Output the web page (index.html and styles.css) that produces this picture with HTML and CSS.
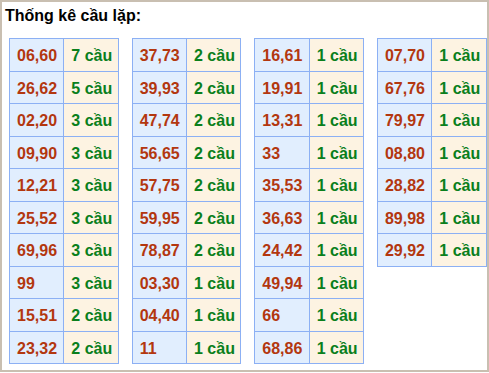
FILE: index.html
```html
<!DOCTYPE html>
<html lang="vi">
<head>
<meta charset="utf-8">
<title>Thống kê cầu lặp</title>
<link rel="stylesheet" href="styles.css">
</head>
<body>
<div class="box">
  <div class="title">Thống kê cầu lặp:</div>
  <div class="tables">
    <table class="tk">
      <tr><td class="num">06,60</td><td class="cnt">7 cầu</td></tr>
      <tr><td class="num">26,62</td><td class="cnt">5 cầu</td></tr>
      <tr><td class="num">02,20</td><td class="cnt">3 cầu</td></tr>
      <tr><td class="num">09,90</td><td class="cnt">3 cầu</td></tr>
      <tr><td class="num">12,21</td><td class="cnt">3 cầu</td></tr>
      <tr><td class="num">25,52</td><td class="cnt">3 cầu</td></tr>
      <tr><td class="num">69,96</td><td class="cnt">3 cầu</td></tr>
      <tr><td class="num">99</td><td class="cnt">3 cầu</td></tr>
      <tr><td class="num">15,51</td><td class="cnt">2 cầu</td></tr>
      <tr><td class="num">23,32</td><td class="cnt">2 cầu</td></tr>
    </table>
    <table class="tk">
      <tr><td class="num">37,73</td><td class="cnt">2 cầu</td></tr>
      <tr><td class="num">39,93</td><td class="cnt">2 cầu</td></tr>
      <tr><td class="num">47,74</td><td class="cnt">2 cầu</td></tr>
      <tr><td class="num">56,65</td><td class="cnt">2 cầu</td></tr>
      <tr><td class="num">57,75</td><td class="cnt">2 cầu</td></tr>
      <tr><td class="num">59,95</td><td class="cnt">2 cầu</td></tr>
      <tr><td class="num">78,87</td><td class="cnt">2 cầu</td></tr>
      <tr><td class="num">03,30</td><td class="cnt">1 cầu</td></tr>
      <tr><td class="num">04,40</td><td class="cnt">1 cầu</td></tr>
      <tr><td class="num">11</td><td class="cnt">1 cầu</td></tr>
    </table>
    <table class="tk">
      <tr><td class="num">16,61</td><td class="cnt">1 cầu</td></tr>
      <tr><td class="num">19,91</td><td class="cnt">1 cầu</td></tr>
      <tr><td class="num">13,31</td><td class="cnt">1 cầu</td></tr>
      <tr><td class="num">33</td><td class="cnt">1 cầu</td></tr>
      <tr><td class="num">35,53</td><td class="cnt">1 cầu</td></tr>
      <tr><td class="num">36,63</td><td class="cnt">1 cầu</td></tr>
      <tr><td class="num">24,42</td><td class="cnt">1 cầu</td></tr>
      <tr><td class="num">49,94</td><td class="cnt">1 cầu</td></tr>
      <tr><td class="num">66</td><td class="cnt">1 cầu</td></tr>
      <tr><td class="num">68,86</td><td class="cnt">1 cầu</td></tr>
    </table>
    <table class="tk">
      <tr><td class="num">07,70</td><td class="cnt">1 cầu</td></tr>
      <tr><td class="num">67,76</td><td class="cnt">1 cầu</td></tr>
      <tr><td class="num">79,97</td><td class="cnt">1 cầu</td></tr>
      <tr><td class="num">08,80</td><td class="cnt">1 cầu</td></tr>
      <tr><td class="num">28,82</td><td class="cnt">1 cầu</td></tr>
      <tr><td class="num">89,98</td><td class="cnt">1 cầu</td></tr>
      <tr><td class="num">29,92</td><td class="cnt">1 cầu</td></tr>
    </table>
  </div>
</div>
</body>
</html>
```
FILE: styles.css
```css
html, body {
  margin: 0;
  padding: 0;
  background: #ffffff;
}
body {
  font-family: "Liberation Sans", Arial, sans-serif;
  font-size: 16px;
}
.box {
  box-sizing: border-box;
  width: 489px;
  height: 372px;
  border: 2px solid #c9bfb1;
  padding: 5px 0 0 3px;
}
.title {
  font-weight: bold;
  color: #000;
  line-height: 18.4px;
}
.tables {
  display: flex;
  align-items: flex-start;
  gap: 13px;
  margin: 12.6px 0 0 4px;
}
.tk {
  width: 109.67px;
  border-collapse: collapse;
  table-layout: fixed;
  flex: none;
}
.tk td {
  border: 1px solid #8cb0f4;
  padding: 8px 7px 6px;
  line-height: 17.5px;
  font-weight: bold;
  white-space: nowrap;
  text-align: left;
}
.tk .num {
  width: 50%;
  background: #e1eefe;
  color: #b3370f;
}
.tk .cnt {
  width: 50%;
  background: #fdf3e2;
  color: #0a7f1c;
}
```
